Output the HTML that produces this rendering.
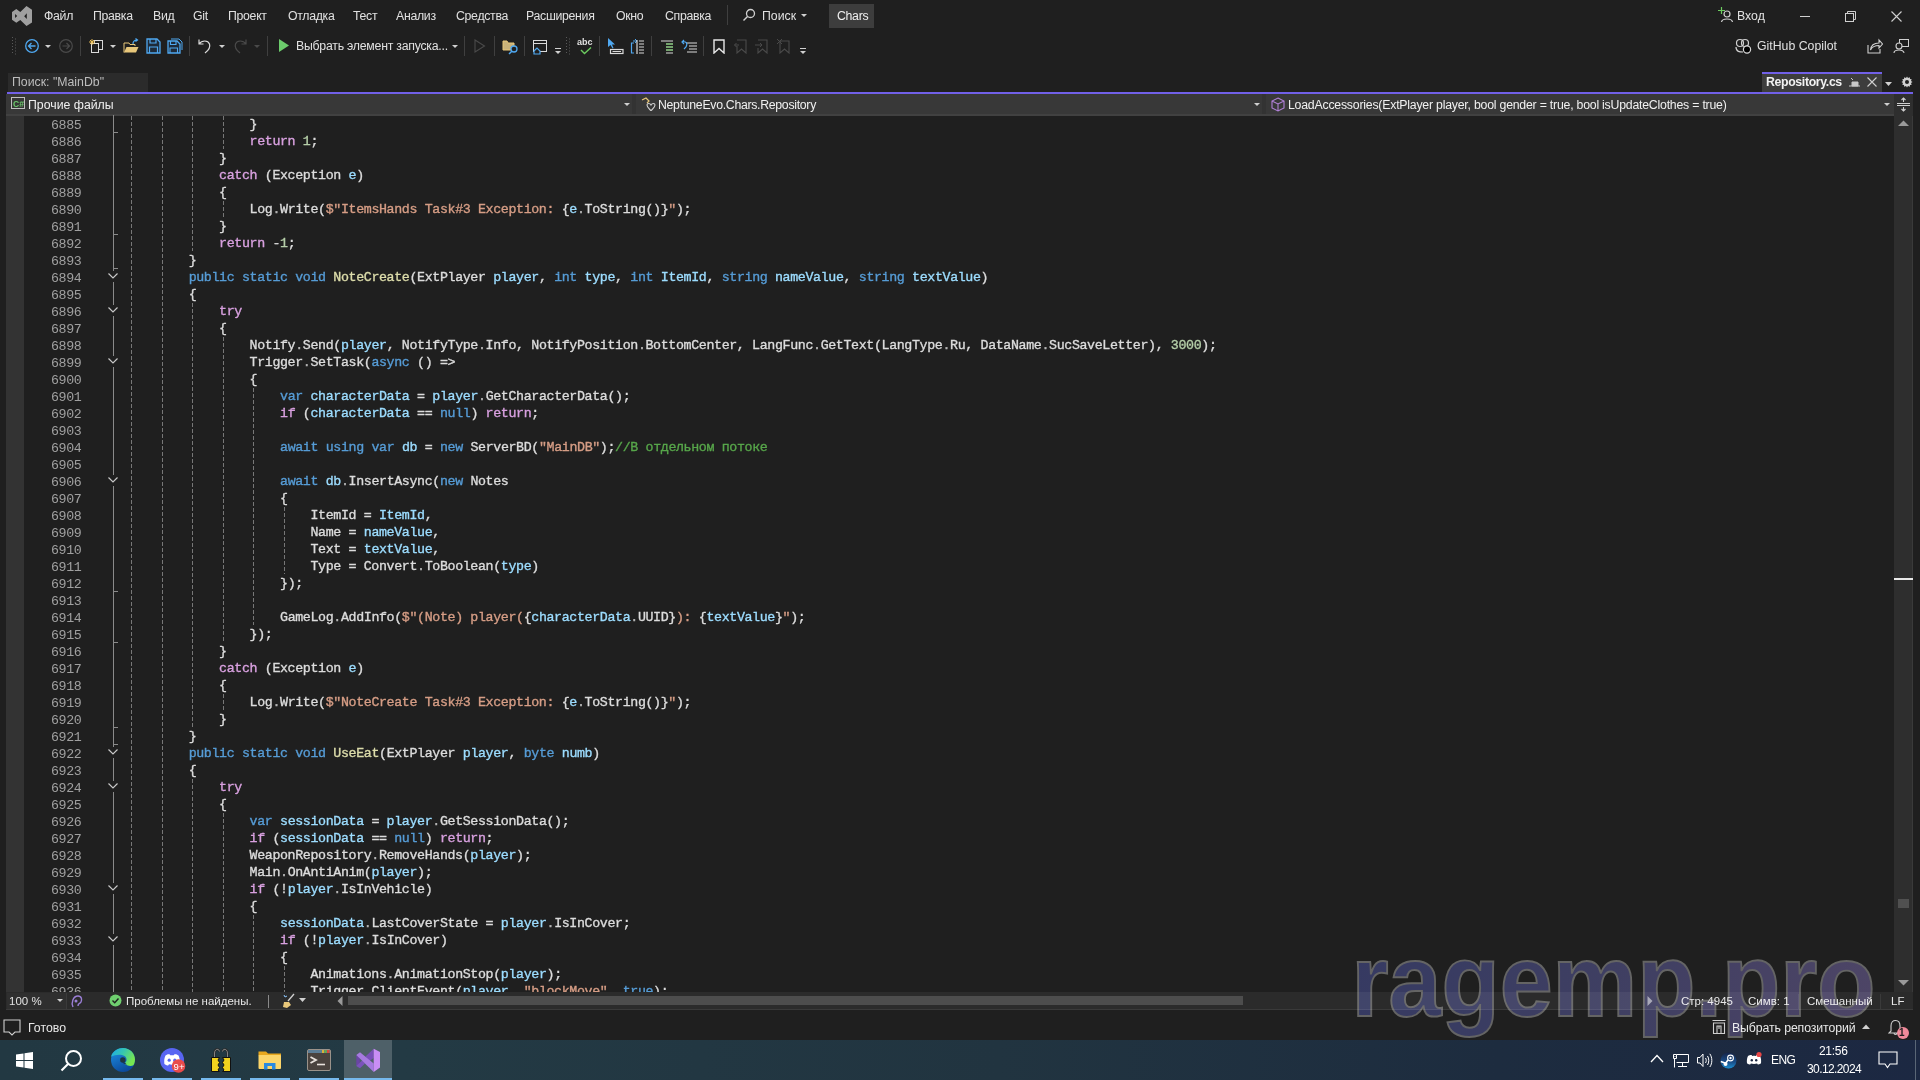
<!DOCTYPE html>
<html><head><meta charset="utf-8">
<style>
*{margin:0;padding:0;box-sizing:border-box}
html,body{width:1920px;height:1080px;overflow:hidden;background:#1F1F1F;font-family:"Liberation Sans",sans-serif;color:#DCDCDC}
.a{position:absolute}
.ui{position:absolute;font-size:12.3px;white-space:nowrap;color:#E0E0E0;line-height:16px}
.ln{position:absolute;left:24px;width:57.5px;text-align:right;font-family:"Liberation Mono",monospace;font-size:13.3px;letter-spacing:-0.35px;line-height:17px;color:#A0A0A0;padding-top:2px}
.cl{position:absolute;white-space:pre;font-family:"Liberation Mono",monospace;font-size:13.3px;letter-spacing:-0.3663px;line-height:17px;padding-top:1px;-webkit-text-stroke:0.35px currentColor}
.gd{position:absolute;width:1px;background:repeating-linear-gradient(to bottom,#777 0,#777 4px,transparent 4px,transparent 6px)}
.chev{position:absolute;left:107px}
.tick{position:absolute;left:113px;width:5px;height:1px;background:#8A8A8A}
.ol{position:absolute;left:113px;width:1px;background:#8A8A8A}
.sep{position:absolute;width:1px;background:#3F3F3F}
</style></head><body>

<!-- title / menu bar -->
<div class="a" style="left:0;top:0;width:1920px;height:31px;background:#1F1F1F"></div>
<svg class="a" style="left:0;top:0" width="40" height="30"><path d="M12 11.9 L16.3 9 L20.3 12 L26.5 5.9 L32 9.8 L32 22.5 L26.5 25.9 L20.3 19.9 L16.3 22.8 L12 19.7 Z M15.1 14 L17.2 16 L15.1 18.1 Z M26.8 13.2 L24.2 16.2 L26.8 19.1 Z" fill="#A0A0A0" fill-rule="evenodd"/></svg>
<div class="ui" style="left:44px;top:8px;letter-spacing:-0.3px">Файл</div>
<div class="ui" style="left:93px;top:8px;letter-spacing:-0.3px">Правка</div>
<div class="ui" style="left:153px;top:8px;letter-spacing:-0.3px">Вид</div>
<div class="ui" style="left:193px;top:8px;letter-spacing:-0.3px">Git</div>
<div class="ui" style="left:228px;top:8px;letter-spacing:-0.3px">Проект</div>
<div class="ui" style="left:288px;top:8px;letter-spacing:-0.3px">Отладка</div>
<div class="ui" style="left:353px;top:8px;letter-spacing:-0.3px">Тест</div>
<div class="ui" style="left:396px;top:8px;letter-spacing:-0.3px">Анализ</div>
<div class="ui" style="left:456px;top:8px;letter-spacing:-0.3px">Средства</div>
<div class="ui" style="left:526px;top:8px;letter-spacing:-0.3px">Расширения</div>
<div class="ui" style="left:616px;top:8px;letter-spacing:-0.3px">Окно</div>
<div class="ui" style="left:665px;top:8px;letter-spacing:-0.3px">Справка</div>
<div class="sep" style="left:727px;top:5px;height:20px"></div>
<svg class="a" style="left:742px;top:8px" width="14" height="14"><circle cx="8.5" cy="5.5" r="4" stroke="#D0D0D0" stroke-width="1.3" fill="none"/><path d="M5.5 8.5 L1.5 12.5" stroke="#D0D0D0" stroke-width="1.5"/></svg>
<div class="ui" style="left:762px;top:8px">Поиск</div>
<svg class="a" style="left:801px;top:14px" width="7" height="4"><path d="M0 0 L6 0 L3 3Z" fill="#D0D0D0"/></svg>
<div class="a" style="left:829px;top:4px;width:45px;height:24px;background:#3D3D3D"></div>
<div class="ui" style="left:837px;top:8px;color:#F0F0F0;letter-spacing:-0.3px">Chars</div>

<svg class="a" style="left:1718px;top:7px" width="16" height="16"><path d="M0 3.5 L7 3.5 M3.5 0 L3.5 7" stroke="#6CCB5F" stroke-width="1.2"/><circle cx="9" cy="7" r="3" stroke="#D0D0D0" stroke-width="1.2" fill="none"/><path d="M3.5 15 C4 11 14 11 14.5 15" stroke="#D0D0D0" stroke-width="1.2" fill="none"/></svg>
<div class="ui" style="left:1737px;top:8px">Вход</div>
<div class="a" style="left:1800px;top:16px;width:10px;height:1px;background:#D0D0D0"></div>
<svg class="a" style="left:1845px;top:11px" width="11" height="11"><path d="M2.5 2.5 L2.5 0.5 L10.5 0.5 L10.5 8.5 L8.5 8.5" stroke="#D0D0D0" fill="none"/><rect x="0.5" y="2.5" width="8" height="8" stroke="#D0D0D0" fill="none"/></svg>
<svg class="a" style="left:1891px;top:11px" width="11" height="11"><path d="M0.5 0.5 L10.5 10.5 M10.5 0.5 L0.5 10.5" stroke="#D0D0D0" stroke-width="1.1"/></svg>

<!-- toolbar -->
<svg class="a" style="left:12px;top:37px" width="5" height="18"><g fill="#5A5A5A"><rect x="0" y="0" width="1" height="1"/><rect x="3" y="1.5" width="1" height="1"/><rect x="0" y="3" width="1" height="1"/><rect x="3" y="4.5" width="1" height="1"/><rect x="0" y="6" width="1" height="1"/><rect x="3" y="7.5" width="1" height="1"/><rect x="0" y="9" width="1" height="1"/><rect x="3" y="10.5" width="1" height="1"/><rect x="0" y="12" width="1" height="1"/><rect x="3" y="13.5" width="1" height="1"/><rect x="0" y="15" width="1" height="1"/><rect x="3" y="16.5" width="1" height="1"/></g></svg>
<svg class="a" style="left:24px;top:38px" width="16" height="16"><circle cx="8" cy="8" r="6.3" stroke="#4FA8F0" stroke-width="1.3" fill="none"/><path d="M11.5 8 L4.5 8 M7.5 5 L4.5 8 L7.5 11" stroke="#4FA8F0" stroke-width="1.3" fill="none"/></svg>
<svg class="a" style="left:45px;top:45px" width="7" height="4"><path d="M0 0 L6 0 L3 3Z" fill="#D0D0D0"/></svg>
<svg class="a" style="left:58px;top:38px" width="16" height="16"><circle cx="8" cy="8" r="6.3" stroke="#4A4A4A" stroke-width="1.2" fill="none"/><path d="M4.5 8 L11.5 8 M8.5 5 L11.5 8 L8.5 11" stroke="#4A4A4A" stroke-width="1.2" fill="none"/></svg>
<div class="sep" style="left:80px;top:36px;height:20px"></div>
<svg class="a" style="left:88px;top:38px" width="18" height="18"><rect x="6.5" y="2.5" width="8" height="9" stroke="#DADADA" fill="none"/><rect x="3.5" y="5.5" width="7" height="9" stroke="#DADADA" fill="#1F1F1F"/><path d="M2 2 L6 6 M6 2 L2 6 M4 1 L4 7 M1 4 L7 4" stroke="#F2C45A" stroke-width="0.9"/></svg>
<svg class="a" style="left:110px;top:45px" width="7" height="4"><path d="M0 0 L6 0 L3 3Z" fill="#D0D0D0"/></svg>
<svg class="a" style="left:123px;top:38px" width="17" height="16"><path d="M1 14.5 L1 5 L6 5 L7 6.5 L12 6.5 L12 8" stroke="#E8C77A" fill="none"/><path d="M1 14.5 L3.5 9 L15.5 9 L13 14.5 Z" fill="#E8C77A"/><path d="M10 6 C10 3 12 2 14 2 M12.5 0.5 L14.5 2 L12.5 3.5" stroke="#4FA8F0" stroke-width="1.2" fill="none"/></svg>
<svg class="a" style="left:146px;top:38px" width="15" height="16"><path d="M1 1 L11 1 L14 4 L14 15 L1 15 Z" stroke="#4FA8F0" stroke-width="1.3" fill="#1E2A38"/><path d="M4 1 L4 5 L10 5 L10 1" stroke="#4FA8F0" stroke-width="1.2" fill="none"/><path d="M3.5 15 L3.5 9 L11.5 9 L11.5 15" stroke="#4FA8F0" stroke-width="1.2" fill="none"/></svg>
<svg class="a" style="left:167px;top:38px" width="16" height="16"><path d="M4 1 L12 1 L15 4 L15 12" stroke="#4FA8F0" fill="none"/><path d="M1 3 L10 3 L13 6 L13 15 L1 15 Z" stroke="#4FA8F0" stroke-width="1.3" fill="#1E2A38"/><path d="M3.5 3 L3.5 6.5 L9 6.5 L9 3" stroke="#4FA8F0" stroke-width="1.1" fill="none"/><path d="M3 15 L3 10 L10.5 10 L10.5 15" stroke="#4FA8F0" stroke-width="1.1" fill="none"/></svg>
<div class="sep" style="left:189px;top:36px;height:20px"></div>
<svg class="a" style="left:197px;top:38px" width="16" height="16"><path d="M2 1.5 L2 6 L6.5 6 M2 6 C5 2 11 2 12.5 6 C13.5 9 12 12 8 15" stroke="#DADADA" stroke-width="1.2" fill="none"/></svg>
<svg class="a" style="left:219px;top:45px" width="7" height="4"><path d="M0 0 L6 0 L3 3Z" fill="#D0D0D0"/></svg>
<svg class="a" style="left:232px;top:38px" width="16" height="16"><path d="M14 1.5 L14 6 L9.5 6 M14 6 C11 2 5 2 3.5 6 C2.5 9 4 12 8 15" stroke="#4A4A4A" stroke-width="1.2" fill="none"/></svg>
<svg class="a" style="left:254px;top:45px" width="7" height="4"><path d="M0 0 L6 0 L3 3Z" fill="#4A4A4A"/></svg>
<div class="sep" style="left:267px;top:36px;height:20px"></div>
<svg class="a" style="left:278px;top:38px" width="12" height="15"><path d="M1 1 L11 7.5 L1 14 Z" fill="#6CCB6C"/></svg>
<div class="ui" style="left:296px;top:38px;letter-spacing:-0.24px">Выбрать элемент запуска...</div>
<svg class="a" style="left:452px;top:45px" width="7" height="4"><path d="M0 0 L6 0 L3 3Z" fill="#D0D0D0"/></svg>
<div class="sep" style="left:464px;top:36px;height:20px"></div>
<svg class="a" style="left:474px;top:39px" width="12" height="15"><path d="M1 1 L10.5 7 L1 13 Z" stroke="#4A4A4A" stroke-width="1.1" fill="none"/></svg>
<div class="sep" style="left:494px;top:36px;height:20px"></div>
<svg class="a" style="left:502px;top:39px" width="17" height="16"><path d="M1 3 L1 11 L12 11 L12 4 L6 4 L5 2 L1 2Z" fill="#C9B27A" stroke="#E8C77A"/><circle cx="12" cy="10" r="3" stroke="#4FA8F0" stroke-width="1.3" fill="#1F1F1F"/><path d="M9.8 12.2 L7 15" stroke="#4FA8F0" stroke-width="1.5"/></svg>
<div class="sep" style="left:524px;top:36px;height:20px"></div>
<svg class="a" style="left:532px;top:39px" width="16" height="16"><rect x="1.5" y="1.5" width="13" height="11" stroke="#DADADA" fill="none"/><path d="M1.5 4.5 L14.5 4.5" stroke="#DADADA"/><path d="M2 12 L5 9 L8 12 L8 15 L2 15 Z" stroke="#4FA8F0" stroke-width="1.2" fill="#1F1F1F"/></svg>
<svg class="a" style="left:555px;top:48px" width="7" height="7"><path d="M0 0.5 L6 0.5" stroke="#D0D0D0"/><path d="M0 3 L6 3 L3 6Z" fill="#D0D0D0"/></svg>
<svg class="a" style="left:566px;top:37px" width="5" height="18"><g fill="#5A5A5A"><rect x="0" y="0" width="1" height="1"/><rect x="3" y="1.5" width="1" height="1"/><rect x="0" y="3" width="1" height="1"/><rect x="3" y="4.5" width="1" height="1"/><rect x="0" y="6" width="1" height="1"/><rect x="3" y="7.5" width="1" height="1"/><rect x="0" y="9" width="1" height="1"/><rect x="3" y="10.5" width="1" height="1"/><rect x="0" y="12" width="1" height="1"/><rect x="3" y="13.5" width="1" height="1"/><rect x="0" y="15" width="1" height="1"/><rect x="3" y="16.5" width="1" height="1"/></g></svg>
<div class="a" style="left:577px;top:37px;font-size:9px;color:#E0E0E0;font-weight:bold">abc</div>
<svg class="a" style="left:580px;top:47px" width="12" height="8"><path d="M1 3 L4.5 6.5 L11 0.5" stroke="#6CCB5F" stroke-width="1.4" fill="none"/></svg>
<div class="sep" style="left:599px;top:36px;height:20px"></div>
<svg class="a" style="left:607px;top:38px" width="17" height="17"><path d="M1 0 L1 9 L3.5 7 L5.5 10.5 L6.5 10 L5 6.5 L8 6.5 Z" fill="#4FA8F0"/><rect x="3.5" y="11.5" width="12.5" height="4" stroke="#DADADA" stroke-width="1.2" fill="none"/><path d="M5.5 13.5 L14 13.5" stroke="#DADADA"/></svg>
<svg class="a" style="left:630px;top:38px" width="15" height="17"><path d="M4 5 L1.5 5 L1.5 15 L4 15" stroke="#4FA8F0" stroke-width="1.2" fill="none"/><path d="M3 3 L6 3 M5 1 L7 3 L5 5" stroke="#4FA8F0" fill="none"/><path d="M7 2 L7 16" stroke="#DADADA" stroke-width="1.2"/><path d="M9 3 L14 3 M9 6 L14 6 M9 9 L14 9 M9 12 L14 12 M9 15 L14 15" stroke="#DADADA" stroke-width="1.1"/></svg>
<div class="sep" style="left:651px;top:36px;height:20px"></div>
<svg class="a" style="left:661px;top:40px" width="13" height="14"><path d="M0 1 L12 1 M5 4 L12 4 M5 7 L12 7 M5 10 L12 10 M5 13 L12 13" stroke="#DADADA" stroke-width="1.1"/><path d="M5 4 L12 4 M5 7 L12 7 M5 10 L12 10" stroke="#6CCB5F" stroke-width="1.1"/></svg>
<svg class="a" style="left:681px;top:39px" width="17" height="15"><path d="M5 4 L16 4 M8 7 L16 7 M8 10 L16 10 M6 13 L16 13" stroke="#DADADA" stroke-width="1.1"/><path d="M3 1 L1 3 L3 5 M1 3 C5 2 7 4 5 8 L3 10" stroke="#4FA8F0" stroke-width="1.2" fill="none"/></svg>
<div class="sep" style="left:703px;top:36px;height:20px"></div>
<svg class="a" style="left:713px;top:39px" width="12" height="15"><path d="M1 1 L11 1 L11 14 L6 9.5 L1 14 Z" stroke="#E8E8E8" stroke-width="1.4" fill="none"/></svg>
<svg class="a" style="left:734px;top:39px" width="13" height="15"><path d="M3 1 L12 1 L12 14 L7.5 10 L3 14 L3 7" stroke="#4A4A4A" stroke-width="1.1" fill="none"/><path d="M0.5 6 L5 6 M2.5 4 L0.5 6 L2.5 8" stroke="#4A4A4A" fill="none"/></svg>
<svg class="a" style="left:755px;top:39px" width="14" height="15"><path d="M3 1 L12 1 L12 14 L7.5 10 L3 14 L3 9" stroke="#4A4A4A" stroke-width="1.1" fill="none"/><path d="M0 6 L7 6 M5 4 L7 6 L5 8" stroke="#4A4A4A" fill="none"/></svg>
<svg class="a" style="left:777px;top:39px" width="14" height="15"><path d="M3 2 L12 2 L12 14 L7.5 10 L3 14 Z" stroke="#4A4A4A" stroke-width="1.1" fill="none"/><path d="M0 0 L5 5 M5 0 L0 5" stroke="#4A4A4A"/></svg>
<svg class="a" style="left:800px;top:48px" width="7" height="7"><path d="M0 0.5 L6 0.5" stroke="#D0D0D0"/><path d="M0 3 L6 3 L3 6Z" fill="#D0D0D0"/></svg>

<svg class="a" style="left:1735px;top:38px" width="17" height="16"><circle cx="5" cy="5" r="3.5" stroke="#D0D0D0" stroke-width="1.2" fill="none"/><circle cx="10" cy="5" r="3.5" stroke="#D0D0D0" stroke-width="1.2" fill="none"/><path d="M1 9 C1 14 5 14 8 14" stroke="#D0D0D0" stroke-width="1.2" fill="none"/><circle cx="12" cy="11.5" r="3.6" fill="#000" stroke="#D8D8D8" stroke-width="1.2"/></svg>
<div class="ui" style="left:1757px;top:38px">GitHub Copilot</div>
<svg class="a" style="left:1867px;top:38px" width="16" height="16"><path d="M1 7 L1 15 L13 15 L13 11" stroke="#D0D0D0" stroke-width="1.1" fill="none"/><path d="M3.5 12 C4 7 8 5 12 5 L12 2 L15.5 6 L12 10 L12 7.5 C8 7.5 5 9 3.5 12Z" stroke="#D0D0D0" stroke-width="1.1" fill="none"/></svg>
<svg class="a" style="left:1893px;top:38px" width="17" height="16"><rect x="6.5" y="1.5" width="9" height="7" stroke="#D0D0D0" fill="none"/><circle cx="6" cy="8" r="3" stroke="#D0D0D0" stroke-width="1.1" fill="#1F1F1F"/><path d="M1 15 C1 11 11 11 11 15" stroke="#D0D0D0" stroke-width="1.1" fill="none"/></svg>

<!-- tab row -->
<div class="a" style="left:8px;top:73px;width:140px;height:19px;background:#2B2B2B"></div>
<div class="ui" style="left:12px;top:74px;color:#BDBDBD">Поиск: "MainDb"</div>
<div class="a" style="left:1762px;top:72px;width:120px;height:20px;background:#3D3D3D;border-top:2px solid #7160E8"></div>
<div class="ui" style="left:1766px;top:74px;font-weight:bold;color:#F2F2F2;font-size:12.3px;letter-spacing:-0.35px">Repository.cs</div>
<svg class="a" style="left:1849px;top:77px" width="11" height="10"><path d="M2 1 L4 3" stroke="#C8C8C8"/><path d="M3 9 L3 5 L9 5 L9 9 Z M0 9 L11 9" stroke="#C8C8C8" fill="#C8C8C8"/></svg>
<svg class="a" style="left:1867px;top:77px" width="10" height="10"><path d="M0.5 0.5 L9.5 9.5 M9.5 0.5 L0.5 9.5" stroke="#D0D0D0" stroke-width="1.1"/></svg>
<svg class="a" style="left:1885px;top:82px" width="8" height="5"><path d="M0 0 L7 0 L3.5 4Z" fill="#D0D0D0"/></svg>
<svg class="a" style="left:1901px;top:76px" width="12" height="12" viewBox="0 0 12 12"><path d="M6 0.5 L7 2 L8.8 1.3 L9 3 L10.7 3.2 L10 5 L11.5 6 L10 7 L10.7 8.8 L9 9 L8.8 10.7 L7 10 L6 11.5 L5 10 L3.2 10.7 L3 9 L1.3 8.8 L2 7 L0.5 6 L2 5 L1.3 3.2 L3 3 L3.2 1.3 L5 2 Z" fill="#D0D0D0"/><circle cx="6" cy="6" r="2" fill="#1F1F1F"/></svg>

<!-- purple doc line -->
<div class="a" style="left:7px;top:92px;width:1906px;height:2px;background:#7160E8"></div>

<!-- nav bar -->
<div class="a" style="left:6px;top:94px;width:1907px;height:22px;background:#383838"></div>
<div class="a" style="left:6px;top:114px;width:1888px;height:2px;background:#414141"></div>
<div class="a" style="left:632px;top:94px;width:4px;height:20px;background:#333"></div>
<div class="a" style="left:1262px;top:94px;width:4px;height:20px;background:#333"></div>
<div class="a" style="left:1894px;top:94px;width:19px;height:22px;background:#2E2E2E"></div>
<svg class="a" style="left:11px;top:97px" width="15" height="13"><rect x="0.5" y="0.5" width="13" height="11" stroke="#C0C0C0" fill="none"/><text x="2" y="9.5" font-size="8.5" font-family="Liberation Sans" fill="#6CCB6C" font-weight="bold">C#</text></svg>
<div class="ui" style="left:28px;top:97px;color:#F0F0F0">Прочие файлы</div>
<svg class="a" style="left:624px;top:103px" width="7" height="4"><path d="M0 0 L6 0 L3 3Z" fill="#D0D0D0"/></svg>
<svg class="a" style="left:641px;top:97px" width="16" height="15"><path d="M1 3 L5 1 L8 4 L6 6" stroke="#E8C77A" stroke-width="1.2" fill="none"/><path d="M6 8 C6 6 9 6 10 8 C11 6 14 6 14 8 C14 11 10 13 10 14 C10 13 6 11 6 8Z" stroke="#D0D0D0" stroke-width="1.1" fill="none"/></svg>
<div class="ui" style="left:658px;top:97px;color:#F0F0F0;letter-spacing:-0.3px">NeptuneEvo.Chars.Repository</div>
<svg class="a" style="left:1254px;top:103px" width="7" height="4"><path d="M0 0 L6 0 L3 3Z" fill="#D0D0D0"/></svg>
<svg class="a" style="left:1271px;top:97px" width="14" height="15"><path d="M7 1 L13 4 L13 11 L7 14 L1 11 L1 4 Z M1 4 L7 7 L13 4 M7 7 L7 14" stroke="#B180D7" stroke-width="1.1" fill="none"/></svg>
<div class="ui" style="left:1288px;top:97px;color:#F0F0F0;letter-spacing:-0.22px">LoadAccessories(ExtPlayer player, bool gender = true, bool isUpdateClothes = true)</div>
<svg class="a" style="left:1884px;top:103px" width="7" height="4"><path d="M0 0 L6 0 L3 3Z" fill="#D0D0D0"/></svg>
<svg class="a" style="left:1897px;top:97px" width="13" height="15"><path d="M0 6.5 L13 6.5 M0 8.5 L13 8.5 M6.5 1 L6.5 5 M6.5 10 L6.5 14 M4.5 3 L6.5 1 L8.5 3 M4.5 12 L6.5 14 L8.5 12" stroke="#D0D0D0" stroke-width="1.1" fill="none"/></svg>

<!-- editor -->
<div class="a" style="left:6px;top:116px;width:18px;height:876px;background:#333333"></div>
<div class="a" style="left:24px;top:116px;width:1870px;height:877px;background:#1F1F1F"></div>
<div class="ln" style="top:115px">6885</div>
<div class="cl" style="top:115px;left:249.56px"><span style="color:#DCDCDC">}</span></div>
<div class="tick" style="top:132px"></div>
<div class="ln" style="top:132px">6886</div>
<div class="cl" style="top:132px;left:249.56px"><span style="color:#D8A0DF">return</span><span style="color:#DCDCDC"> </span><span style="color:#B5CEA8">1</span><span style="color:#DCDCDC">;</span></div>
<div class="ln" style="top:149px">6887</div>
<div class="cl" style="top:149px;left:219.10px"><span style="color:#DCDCDC">}</span></div>
<div class="ln" style="top:166px">6888</div>
<div class="cl" style="top:166px;left:219.10px"><span style="color:#D8A0DF">catch</span><span style="color:#DCDCDC"> (Exception </span><span style="color:#9CDCFE">e</span><span style="color:#DCDCDC">)</span></div>
<div class="ln" style="top:183px">6889</div>
<div class="cl" style="top:183px;left:219.10px"><span style="color:#DCDCDC">{</span></div>
<div class="ln" style="top:200px">6890</div>
<div class="cl" style="top:200px;left:249.56px"><span style="color:#DCDCDC">Log</span><span style="color:#B4B4B4">.</span><span style="color:#DCDCDC">Write(</span><span style="color:#D69D85">$&quot;ItemsHands Task#3 Exception: </span><span style="color:#DCDCDC">{</span><span style="color:#9CDCFE">e</span><span style="color:#B4B4B4">.</span><span style="color:#DCDCDC">ToString()</span><span style="color:#DCDCDC">}</span><span style="color:#D69D85">&quot;</span><span style="color:#DCDCDC">);</span></div>
<div class="ln" style="top:217px">6891</div>
<div class="cl" style="top:217px;left:219.10px"><span style="color:#DCDCDC">}</span></div>
<div class="tick" style="top:234px"></div>
<div class="ln" style="top:234px">6892</div>
<div class="cl" style="top:234px;left:219.10px"><span style="color:#D8A0DF">return</span><span style="color:#DCDCDC"> -</span><span style="color:#B5CEA8">1</span><span style="color:#DCDCDC">;</span></div>
<div class="ln" style="top:251px">6893</div>
<div class="cl" style="top:251px;left:188.64px"><span style="color:#DCDCDC">}</span></div>
<div class="tick" style="top:268px"></div>
<div class="ln" style="top:268px">6894</div>
<div class="cl" style="top:268px;left:188.64px"><span style="color:#569CD6">public</span><span style="color:#DCDCDC"> </span><span style="color:#569CD6">static</span><span style="color:#DCDCDC"> </span><span style="color:#569CD6">void</span><span style="color:#DCDCDC"> </span><span style="color:#DCDCAA">NoteCreate</span><span style="color:#DCDCDC">(ExtPlayer </span><span style="color:#9CDCFE">player</span><span style="color:#DCDCDC">, </span><span style="color:#569CD6">int</span><span style="color:#DCDCDC"> </span><span style="color:#9CDCFE">type</span><span style="color:#DCDCDC">, </span><span style="color:#569CD6">int</span><span style="color:#DCDCDC"> </span><span style="color:#9CDCFE">ItemId</span><span style="color:#DCDCDC">, </span><span style="color:#569CD6">string</span><span style="color:#DCDCDC"> </span><span style="color:#9CDCFE">nameValue</span><span style="color:#DCDCDC">, </span><span style="color:#569CD6">string</span><span style="color:#DCDCDC"> </span><span style="color:#9CDCFE">textValue</span><span style="color:#DCDCDC">)</span></div>
<svg class="chev" style="top:268px" width="12" height="17"><path d="M1.5 5.5 L6 10 L10.5 5.5" stroke="#C8C8C8" stroke-width="1.2" fill="none"/></svg>
<div class="ln" style="top:285px">6895</div>
<div class="cl" style="top:285px;left:188.64px"><span style="color:#DCDCDC">{</span></div>
<div class="ln" style="top:302px">6896</div>
<div class="cl" style="top:302px;left:219.10px"><span style="color:#D8A0DF">try</span></div>
<svg class="chev" style="top:302px" width="12" height="17"><path d="M1.5 5.5 L6 10 L10.5 5.5" stroke="#C8C8C8" stroke-width="1.2" fill="none"/></svg>
<div class="ln" style="top:319px">6897</div>
<div class="cl" style="top:319px;left:219.10px"><span style="color:#DCDCDC">{</span></div>
<div class="ln" style="top:336px">6898</div>
<div class="cl" style="top:336px;left:249.56px"><span style="color:#DCDCDC">Notify</span><span style="color:#B4B4B4">.</span><span style="color:#DCDCDC">Send(</span><span style="color:#9CDCFE">player</span><span style="color:#DCDCDC">, NotifyType</span><span style="color:#B4B4B4">.</span><span style="color:#DCDCDC">Info, NotifyPosition</span><span style="color:#B4B4B4">.</span><span style="color:#DCDCDC">BottomCenter, LangFunc</span><span style="color:#B4B4B4">.</span><span style="color:#DCDCDC">GetText(LangType</span><span style="color:#B4B4B4">.</span><span style="color:#DCDCDC">Ru, DataName</span><span style="color:#B4B4B4">.</span><span style="color:#DCDCDC">SucSaveLetter), </span><span style="color:#B5CEA8">3000</span><span style="color:#DCDCDC">);</span></div>
<div class="ln" style="top:353px">6899</div>
<div class="cl" style="top:353px;left:249.56px"><span style="color:#DCDCDC">Trigger</span><span style="color:#B4B4B4">.</span><span style="color:#DCDCDC">SetTask(</span><span style="color:#569CD6">async</span><span style="color:#DCDCDC"> () =&gt;</span></div>
<svg class="chev" style="top:353px" width="12" height="17"><path d="M1.5 5.5 L6 10 L10.5 5.5" stroke="#C8C8C8" stroke-width="1.2" fill="none"/></svg>
<div class="ln" style="top:370px">6900</div>
<div class="cl" style="top:370px;left:249.56px"><span style="color:#DCDCDC">{</span></div>
<div class="ln" style="top:387px">6901</div>
<div class="cl" style="top:387px;left:280.02px"><span style="color:#569CD6">var</span><span style="color:#DCDCDC"> </span><span style="color:#9CDCFE">characterData</span><span style="color:#DCDCDC"> = </span><span style="color:#9CDCFE">player</span><span style="color:#B4B4B4">.</span><span style="color:#DCDCDC">GetCharacterData();</span></div>
<div class="ln" style="top:404px">6902</div>
<div class="cl" style="top:404px;left:280.02px"><span style="color:#D8A0DF">if</span><span style="color:#DCDCDC"> (</span><span style="color:#9CDCFE">characterData</span><span style="color:#DCDCDC"> == </span><span style="color:#569CD6">null</span><span style="color:#DCDCDC">) </span><span style="color:#D8A0DF">return</span><span style="color:#DCDCDC">;</span></div>
<div class="ln" style="top:421px">6903</div>
<div class="ln" style="top:438px">6904</div>
<div class="cl" style="top:438px;left:280.02px"><span style="color:#569CD6">await</span><span style="color:#DCDCDC"> </span><span style="color:#569CD6">using</span><span style="color:#DCDCDC"> </span><span style="color:#569CD6">var</span><span style="color:#DCDCDC"> </span><span style="color:#9CDCFE">db</span><span style="color:#DCDCDC"> = </span><span style="color:#569CD6">new</span><span style="color:#DCDCDC"> ServerBD(</span><span style="color:#D69D85">&quot;MainDB&quot;</span><span style="color:#DCDCDC">);</span><span style="color:#57A64A">//В отдельном потоке</span></div>
<div class="ln" style="top:455px">6905</div>
<div class="ln" style="top:472px">6906</div>
<div class="cl" style="top:472px;left:280.02px"><span style="color:#569CD6">await</span><span style="color:#DCDCDC"> </span><span style="color:#9CDCFE">db</span><span style="color:#B4B4B4">.</span><span style="color:#DCDCDC">InsertAsync(</span><span style="color:#569CD6">new</span><span style="color:#DCDCDC"> Notes</span></div>
<svg class="chev" style="top:472px" width="12" height="17"><path d="M1.5 5.5 L6 10 L10.5 5.5" stroke="#C8C8C8" stroke-width="1.2" fill="none"/></svg>
<div class="ln" style="top:489px">6907</div>
<div class="cl" style="top:489px;left:280.02px"><span style="color:#DCDCDC">{</span></div>
<div class="ln" style="top:506px">6908</div>
<div class="cl" style="top:506px;left:310.48px"><span style="color:#DCDCDC">ItemId = </span><span style="color:#9CDCFE">ItemId</span><span style="color:#DCDCDC">,</span></div>
<div class="ln" style="top:523px">6909</div>
<div class="cl" style="top:523px;left:310.48px"><span style="color:#DCDCDC">Name = </span><span style="color:#9CDCFE">nameValue</span><span style="color:#DCDCDC">,</span></div>
<div class="ln" style="top:540px">6910</div>
<div class="cl" style="top:540px;left:310.48px"><span style="color:#DCDCDC">Text = </span><span style="color:#9CDCFE">textValue</span><span style="color:#DCDCDC">,</span></div>
<div class="ln" style="top:557px">6911</div>
<div class="cl" style="top:557px;left:310.48px"><span style="color:#DCDCDC">Type = Convert</span><span style="color:#B4B4B4">.</span><span style="color:#DCDCDC">ToBoolean(</span><span style="color:#9CDCFE">type</span><span style="color:#DCDCDC">)</span></div>
<div class="ln" style="top:574px">6912</div>
<div class="cl" style="top:574px;left:280.02px"><span style="color:#DCDCDC">});</span></div>
<div class="tick" style="top:591px"></div>
<div class="ln" style="top:591px">6913</div>
<div class="ln" style="top:608px">6914</div>
<div class="cl" style="top:608px;left:280.02px"><span style="color:#DCDCDC">GameLog</span><span style="color:#B4B4B4">.</span><span style="color:#DCDCDC">AddInfo(</span><span style="color:#D69D85">$&quot;(Note) player(</span><span style="color:#DCDCDC">{</span><span style="color:#9CDCFE">characterData</span><span style="color:#B4B4B4">.</span><span style="color:#DCDCDC">UUID</span><span style="color:#DCDCDC">}</span><span style="color:#D69D85">): </span><span style="color:#DCDCDC">{</span><span style="color:#9CDCFE">textValue</span><span style="color:#DCDCDC">}</span><span style="color:#D69D85">&quot;</span><span style="color:#DCDCDC">);</span></div>
<div class="ln" style="top:625px">6915</div>
<div class="cl" style="top:625px;left:249.56px"><span style="color:#DCDCDC">});</span></div>
<div class="tick" style="top:642px"></div>
<div class="ln" style="top:642px">6916</div>
<div class="cl" style="top:642px;left:219.10px"><span style="color:#DCDCDC">}</span></div>
<div class="ln" style="top:659px">6917</div>
<div class="cl" style="top:659px;left:219.10px"><span style="color:#D8A0DF">catch</span><span style="color:#DCDCDC"> (Exception </span><span style="color:#9CDCFE">e</span><span style="color:#DCDCDC">)</span></div>
<div class="ln" style="top:676px">6918</div>
<div class="cl" style="top:676px;left:219.10px"><span style="color:#DCDCDC">{</span></div>
<div class="ln" style="top:693px">6919</div>
<div class="cl" style="top:693px;left:249.56px"><span style="color:#DCDCDC">Log</span><span style="color:#B4B4B4">.</span><span style="color:#DCDCDC">Write(</span><span style="color:#D69D85">$&quot;NoteCreate Task#3 Exception: </span><span style="color:#DCDCDC">{</span><span style="color:#9CDCFE">e</span><span style="color:#B4B4B4">.</span><span style="color:#DCDCDC">ToString()</span><span style="color:#DCDCDC">}</span><span style="color:#D69D85">&quot;</span><span style="color:#DCDCDC">);</span></div>
<div class="ln" style="top:710px">6920</div>
<div class="cl" style="top:710px;left:219.10px"><span style="color:#DCDCDC">}</span></div>
<div class="tick" style="top:727px"></div>
<div class="ln" style="top:727px">6921</div>
<div class="cl" style="top:727px;left:188.64px"><span style="color:#DCDCDC">}</span></div>
<div class="tick" style="top:744px"></div>
<div class="ln" style="top:744px">6922</div>
<div class="cl" style="top:744px;left:188.64px"><span style="color:#569CD6">public</span><span style="color:#DCDCDC"> </span><span style="color:#569CD6">static</span><span style="color:#DCDCDC"> </span><span style="color:#569CD6">void</span><span style="color:#DCDCDC"> </span><span style="color:#DCDCAA">UseEat</span><span style="color:#DCDCDC">(ExtPlayer </span><span style="color:#9CDCFE">player</span><span style="color:#DCDCDC">, </span><span style="color:#569CD6">byte</span><span style="color:#DCDCDC"> </span><span style="color:#9CDCFE">numb</span><span style="color:#DCDCDC">)</span></div>
<svg class="chev" style="top:744px" width="12" height="17"><path d="M1.5 5.5 L6 10 L10.5 5.5" stroke="#C8C8C8" stroke-width="1.2" fill="none"/></svg>
<div class="ln" style="top:761px">6923</div>
<div class="cl" style="top:761px;left:188.64px"><span style="color:#DCDCDC">{</span></div>
<div class="ln" style="top:778px">6924</div>
<div class="cl" style="top:778px;left:219.10px"><span style="color:#D8A0DF">try</span></div>
<svg class="chev" style="top:778px" width="12" height="17"><path d="M1.5 5.5 L6 10 L10.5 5.5" stroke="#C8C8C8" stroke-width="1.2" fill="none"/></svg>
<div class="ln" style="top:795px">6925</div>
<div class="cl" style="top:795px;left:219.10px"><span style="color:#DCDCDC">{</span></div>
<div class="ln" style="top:812px">6926</div>
<div class="cl" style="top:812px;left:249.56px"><span style="color:#569CD6">var</span><span style="color:#DCDCDC"> </span><span style="color:#9CDCFE">sessionData</span><span style="color:#DCDCDC"> = </span><span style="color:#9CDCFE">player</span><span style="color:#B4B4B4">.</span><span style="color:#DCDCDC">GetSessionData();</span></div>
<div class="ln" style="top:829px">6927</div>
<div class="cl" style="top:829px;left:249.56px"><span style="color:#D8A0DF">if</span><span style="color:#DCDCDC"> (</span><span style="color:#9CDCFE">sessionData</span><span style="color:#DCDCDC"> == </span><span style="color:#569CD6">null</span><span style="color:#DCDCDC">) </span><span style="color:#D8A0DF">return</span><span style="color:#DCDCDC">;</span></div>
<div class="ln" style="top:846px">6928</div>
<div class="cl" style="top:846px;left:249.56px"><span style="color:#DCDCDC">WeaponRepository</span><span style="color:#B4B4B4">.</span><span style="color:#DCDCDC">RemoveHands(</span><span style="color:#9CDCFE">player</span><span style="color:#DCDCDC">);</span></div>
<div class="ln" style="top:863px">6929</div>
<div class="cl" style="top:863px;left:249.56px"><span style="color:#DCDCDC">Main</span><span style="color:#B4B4B4">.</span><span style="color:#DCDCDC">OnAntiAnim(</span><span style="color:#9CDCFE">player</span><span style="color:#DCDCDC">);</span></div>
<div class="ln" style="top:880px">6930</div>
<div class="cl" style="top:880px;left:249.56px"><span style="color:#D8A0DF">if</span><span style="color:#DCDCDC"> (!</span><span style="color:#9CDCFE">player</span><span style="color:#B4B4B4">.</span><span style="color:#DCDCDC">IsInVehicle)</span></div>
<svg class="chev" style="top:880px" width="12" height="17"><path d="M1.5 5.5 L6 10 L10.5 5.5" stroke="#C8C8C8" stroke-width="1.2" fill="none"/></svg>
<div class="ln" style="top:897px">6931</div>
<div class="cl" style="top:897px;left:249.56px"><span style="color:#DCDCDC">{</span></div>
<div class="ln" style="top:914px">6932</div>
<div class="cl" style="top:914px;left:280.02px"><span style="color:#9CDCFE">sessionData</span><span style="color:#B4B4B4">.</span><span style="color:#DCDCDC">LastCoverState = </span><span style="color:#9CDCFE">player</span><span style="color:#B4B4B4">.</span><span style="color:#DCDCDC">IsInCover;</span></div>
<div class="ln" style="top:931px">6933</div>
<div class="cl" style="top:931px;left:280.02px"><span style="color:#D8A0DF">if</span><span style="color:#DCDCDC"> (!</span><span style="color:#9CDCFE">player</span><span style="color:#B4B4B4">.</span><span style="color:#DCDCDC">IsInCover)</span></div>
<svg class="chev" style="top:931px" width="12" height="17"><path d="M1.5 5.5 L6 10 L10.5 5.5" stroke="#C8C8C8" stroke-width="1.2" fill="none"/></svg>
<div class="ln" style="top:948px">6934</div>
<div class="cl" style="top:948px;left:280.02px"><span style="color:#DCDCDC">{</span></div>
<div class="ln" style="top:965px">6935</div>
<div class="cl" style="top:965px;left:310.48px"><span style="color:#DCDCDC">Animations</span><span style="color:#B4B4B4">.</span><span style="color:#DCDCDC">AnimationStop(</span><span style="color:#9CDCFE">player</span><span style="color:#DCDCDC">);</span></div>
<div class="ln" style="top:982px">6936</div>
<div class="cl" style="top:982px;left:310.48px"><span style="color:#DCDCDC">Trigger</span><span style="color:#B4B4B4">.</span><span style="color:#DCDCDC">ClientEvent(</span><span style="color:#9CDCFE">player</span><span style="color:#DCDCDC">, </span><span style="color:#D69D85">&quot;blockMove&quot;</span><span style="color:#DCDCDC">, </span><span style="color:#569CD6">true</span><span style="color:#DCDCDC">);</span></div>
<div class="gd" style="left:131px;top:116px;height:876px"></div>
<div class="gd" style="left:162px;top:116px;height:876px"></div>
<div class="gd" style="left:192px;top:116px;height:135px"></div>
<div class="gd" style="left:192px;top:303px;height:424px"></div>
<div class="gd" style="left:192px;top:779px;height:213px"></div>
<div class="gd" style="left:223px;top:116px;height:33px"></div>
<div class="gd" style="left:223px;top:201px;height:16px"></div>
<div class="gd" style="left:223px;top:337px;height:305px"></div>
<div class="gd" style="left:223px;top:694px;height:16px"></div>
<div class="gd" style="left:223px;top:813px;height:179px"></div>
<div class="gd" style="left:253px;top:388px;height:237px"></div>
<div class="gd" style="left:253px;top:915px;height:77px"></div>
<div class="gd" style="left:284px;top:507px;height:67px"></div>
<div class="gd" style="left:284px;top:966px;height:26px"></div>
<div class="ol" style="top:115px;height:156px"></div>
<div class="ol" style="top:282px;height:23px"></div>
<div class="ol" style="top:316px;height:40px"></div>
<div class="ol" style="top:367px;height:108px"></div>
<div class="ol" style="top:486px;height:261px"></div>
<div class="ol" style="top:758px;height:23px"></div>
<div class="ol" style="top:792px;height:91px"></div>
<div class="ol" style="top:894px;height:40px"></div>
<div class="ol" style="top:945px;height:48px"></div>

<!-- vertical scrollbar -->
<div class="a" style="left:1894px;top:116px;width:19px;height:877px;background:#2E2E2E;border-right:1px solid #3A3A3A"></div>
<svg class="a" style="left:1898px;top:120px" width="11" height="6"><path d="M0 6 L5.5 0.5 L11 6Z" fill="#9A9A9A"/></svg>
<div class="a" style="left:1894px;top:578px;width:19px;height:2px;background:#E8E8E8"></div>
<div class="a" style="left:1898px;top:899px;width:11px;height:9px;background:#505050"></div>
<svg class="a" style="left:1898px;top:980px" width="11" height="6"><path d="M0 0 L11 0 L5.5 5.5Z" fill="#9A9A9A"/></svg>

<!-- editor bottom bar -->
<div class="a" style="left:6px;top:992px;width:1907px;height:18px;background:#2B2B2B;border-bottom:1px solid #3A3A3A"></div>
<div class="a" style="left:7px;top:993px;width:59px;height:16px;background:#2F2F2F"></div>
<div class="ui" style="left:9px;top:993px;font-size:11.5px;color:#E0E0E0">100 %</div>
<svg class="a" style="left:57px;top:999px" width="7" height="4"><path d="M0 0 L6 0 L3 3Z" fill="#D0D0D0"/></svg>
<div class="a" style="left:66px;top:993px;width:1px;height:16px;background:#3A3A3A"></div>
<svg class="a" style="left:70px;top:994px" width="13" height="14"><path d="M3 13 C1 9 3 2 8 2 C12 2 12 6 11 8 C10 10 8 9 8 12" stroke="#9B7FD6" stroke-width="1.4" fill="none"/><circle cx="6" cy="7" r="1.5" fill="#9B7FD6"/></svg>
<svg class="a" style="left:109px;top:994px" width="13" height="13"><circle cx="6.5" cy="6.5" r="6" fill="#6FCF6F"/><path d="M3.5 6.5 L5.7 8.7 L9.5 4.5" stroke="#1F1F1F" stroke-width="1.4" fill="none"/></svg>
<div class="ui" style="left:126px;top:993px;font-size:11.5px;color:#E8E8E8">Проблемы не найдены.</div>
<div class="a" style="left:268px;top:995px;width:1px;height:13px;background:#8A8A8A"></div>
<svg class="a" style="left:282px;top:993px" width="14" height="15"><path d="M12 1 L6 8" stroke="#D0D0D0" stroke-width="1.3"/><path d="M2 9 L7 9 L9 12 L5 15 L1 14 Z" fill="#E8C77A"/><path d="M2 2 L3 4 L5 3" stroke="#8EC9FF" fill="none"/></svg>
<svg class="a" style="left:299px;top:998px" width="8" height="5"><path d="M0 0 L7 0 L3.5 4Z" fill="#D0D0D0"/></svg>
<svg class="a" style="left:337px;top:996px" width="6" height="10"><path d="M5.5 0 L0.5 5 L5.5 10Z" fill="#9A9A9A"/></svg>
<div class="a" style="left:348px;top:996px;width:895px;height:9px;background:#4D4D4D"></div>
<svg class="a" style="left:1647px;top:996px" width="6" height="10"><path d="M0.5 0 L5.5 5 L0.5 10Z" fill="#9A9A9A"/></svg>
<div class="ui" style="left:1681px;top:993px;font-size:11.5px;color:#E8E8E8">Стр: 4945</div>
<div class="ui" style="left:1748px;top:993px;font-size:11.5px;color:#E8E8E8">Симв: 1</div>
<div class="a" style="left:1798px;top:994px;width:1px;height:15px;background:#3A3A3A"></div>
<div class="ui" style="left:1807px;top:993px;font-size:11.5px;color:#E8E8E8">Смешанный</div>
<div class="a" style="left:1880px;top:994px;width:1px;height:15px;background:#3A3A3A"></div>
<div class="ui" style="left:1891px;top:993px;font-size:11.5px;color:#E8E8E8">LF</div>

<!-- status bar -->
<div class="a" style="left:0;top:1011px;width:1920px;height:29px;background:#1F1F1F"></div>
<svg class="a" style="left:3px;top:1019px" width="18" height="18"><path d="M1 1 L17 1 L17 13 L12 13 L9 16 L6 13 L1 13 Z" stroke="#D0D0D0" stroke-width="1.1" fill="none"/></svg>
<div class="ui" style="left:28px;top:1020px;color:#E8E8E8">Готово</div>
<svg class="a" style="left:1712px;top:1020px" width="14" height="14"><path d="M0.5 0.5 L13.5 0.5 M1.5 3 L12.5 3 L12.5 13.5 L1.5 13.5 Z M5 13.5 L5 6 L9 6 L9 13.5 M7 6 L7 9" stroke="#D0D0D0" stroke-width="1.1" fill="none"/></svg>
<div class="ui" style="left:1732px;top:1020px;color:#E8E8E8;letter-spacing:-0.1px">Выбрать репозиторий</div>
<svg class="a" style="left:1862px;top:1024px" width="9" height="5"><path d="M0 5 L8 5 L4 0.5Z" fill="#D0D0D0"/></svg>
<svg class="a" style="left:1888px;top:1019px" width="18" height="18"><path d="M3 12 L3 7 C3 3 5 1.5 7.5 1.5 C10 1.5 12 3 12 7 L12 12 L14 14 L1 14 Z M6 14 C6 16 9 16 9 14" stroke="#D0D0D0" stroke-width="1.1" fill="none"/></svg>
<div class="a" style="left:1897px;top:1027px;width:12px;height:12px;border-radius:6px;background:#F08A9A"></div>
<div class="a" style="left:1899px;top:1027px;font-size:10px;color:#1F1F1F;line-height:12px;font-weight:bold">1</div>

<!-- taskbar -->
<div class="a" style="left:0;top:1040px;width:1920px;height:40px;background:linear-gradient(to right,#223842 0%,#233A44 21%,#213440 52%,#1D2C3F 78%,#1C2842 100%)"></div>
<svg class="a" style="left:16px;top:1052px" width="18" height="17"><path d="M0 2.5 L7.5 1.4 L7.5 8 L0 8 Z M8.5 1.2 L17 0 L17 8 L8.5 8 Z M0 9 L7.5 9 L7.5 15.5 L0 14.5 Z M8.5 9 L17 9 L17 17 L8.5 15.8 Z" fill="#FFFFFF"/></svg>
<svg class="a" style="left:60px;top:1049px" width="24" height="23"><circle cx="13.5" cy="9.5" r="7.5" stroke="#FFFFFF" stroke-width="2" fill="none"/><path d="M8 15 L1.5 21.5" stroke="#FFFFFF" stroke-width="2.2"/></svg>
<svg class="a" style="left:110px;top:1047px" width="26" height="26" viewBox="0 0 26 26"><defs><linearGradient id="eg" x1="0" y1="0" x2="1" y2="0.5"><stop offset="0" stop-color="#1AA8F2"/><stop offset="0.5" stop-color="#36C6B0"/><stop offset="1" stop-color="#78E650"/></linearGradient><linearGradient id="eb" x1="0" y1="0" x2="0.5" y2="1"><stop offset="0" stop-color="#1E94E8"/><stop offset="1" stop-color="#0C4A9B"/></linearGradient></defs><circle cx="13" cy="13" r="12" fill="url(#eb)"/><path d="M0.9 9.8 C2.5 4 8 0.9 13 0.9 C19.5 0.9 25 6 25 12.5 C25 15.5 24 17.8 23 18.5 C20.5 19.5 16 18.5 14.5 16.2 C17 15 17.5 11 14.5 9 C11 7 5 7.5 0.9 9.8 Z" fill="url(#eg)"/><circle cx="12.8" cy="12.9" r="2.7" fill="#1F3540"/><path d="M12 15 C13 16.5 15 17.5 17 17.6 L14.6 15.6 Z" fill="#173050"/></svg>
<svg class="a" style="left:159px;top:1047px" width="28" height="27" viewBox="0 0 28 27"><circle cx="13" cy="13" r="12" fill="#5865F2"/><path d="M6.5 8.5 C8.5 7 10 7 10.8 7.6 L11.3 8.3 C12.4 8.1 13.6 8.1 14.7 8.3 L15.2 7.6 C16 7 17.5 7 19.5 8.5 C20.8 11 21 14 20.6 17 C19 18.3 17.6 18.6 16.8 18.6 L16 17.3 C14 17.8 12 17.8 10 17.3 L9.2 18.6 C8.4 18.6 7 18.3 5.4 17 C5 14 5.2 11 6.5 8.5 Z" fill="#FFFFFF"/><circle cx="10.2" cy="13.2" r="1.6" fill="#5865F2"/><circle cx="15.8" cy="13.2" r="1.6" fill="#5865F2"/><circle cx="19.5" cy="19" r="6.8" fill="#E84B4B"/><text x="14.6" y="22.6" font-size="9.5" font-family="Liberation Sans" fill="#fff">9+</text></svg>
<svg class="a" style="left:210px;top:1047px" width="22" height="26" viewBox="0 0 22 26"><path d="M4.5 10 L4.5 6 C4.5 2 9 1 9.5 4.5 M12.5 4.5 C13 1 17.5 2 17.5 6 L17.5 10" stroke="#2A2A2A" stroke-width="2.2" fill="none"/><path d="M4.5 10 L4.5 6 C4.5 2 9 1 9.5 4.5 M12.5 4.5 C13 1 17.5 2 17.5 6 L17.5 10" stroke="#9A9A9A" stroke-width="0.8" fill="none"/><path d="M1.5 10.5 L9.5 10.5 L8 13 L9.5 15.5 L8 18 L9.5 20.5 L8 23 L9.5 24.5 L1.5 24.5 Z" fill="#F2D21E" stroke="#111" stroke-width="1"/><path d="M20.5 10.5 L12.5 10.5 L14 13 L12.5 15.5 L14 18 L12.5 20.5 L14 23 L12.5 24.5 L20.5 24.5 Z" fill="#F2D21E" stroke="#111" stroke-width="1"/></svg>
<svg class="a" style="left:258px;top:1050px" width="24" height="21"><path d="M0.5 1.5 L8 1.5 L10 3.5 L23 3.5 L23 6 L0.5 6 Z" fill="#E8A81E"/><rect x="0.5" y="5" width="22.5" height="14" rx="1" fill="#FCD66A"/><path d="M6 19.5 L6 13 L17.5 13 L17.5 19.5 L14 19.5 L14 16 L9.5 16 L9.5 19.5 Z" fill="#2A8AE0"/></svg>
<svg class="a" style="left:307px;top:1049px" width="24" height="22" viewBox="0 0 24 22"><rect x="0.5" y="0.5" width="23" height="21" rx="1.5" fill="#4A433E" stroke="#9A928A"/><rect x="1" y="1" width="22" height="3" fill="#5C7D95"/><rect x="15" y="1" width="2" height="3" fill="#D8B23A"/><rect x="17.5" y="1" width="2" height="3" fill="#6BB040"/><rect x="20" y="1" width="2.5" height="3" fill="#D84A3A"/><path d="M3.5 8 L9 11 L3.5 14" stroke="#E8E2DC" stroke-width="1.8" fill="none"/><path d="M10 15.5 L18 15.5" stroke="#E8E2DC" stroke-width="1.6"/></svg>
<div class="a" style="left:344px;top:1040px;width:48px;height:40px;background:#4E6068"></div>
<svg class="a" style="left:355px;top:1047px" width="27" height="27" viewBox="0 0 27 27"><path d="M1.3 8 L4.8 10.2 L4.8 17 L1.3 19Z" fill="#6A45A5"/><path d="M1.3 19 L7 13.5 L10 16.5 L5 21.2Z" fill="#7A52BA"/><path d="M10.5 9.5 L18.7 1.7 L18.7 11 L13.8 14.5Z" fill="#7950B8"/><path d="M1.3 8 L5 5.2 L18.7 16.5 L18.7 25 Z" fill="#A77AE0"/><path d="M18.7 1.7 L25 5 L25 20.6 L18.7 25Z" fill="#C98EF5"/></svg>
<div class="a" style="left:103px;top:1078px;width:40px;height:2px;background:#76B9ED"></div>
<div class="a" style="left:152px;top:1078px;width:40px;height:2px;background:#76B9ED"></div>
<div class="a" style="left:201px;top:1078px;width:40px;height:2px;background:#76B9ED"></div>
<div class="a" style="left:250px;top:1078px;width:40px;height:2px;background:#76B9ED"></div>
<div class="a" style="left:299px;top:1078px;width:40px;height:2px;background:#76B9ED"></div>
<div class="a" style="left:344px;top:1078px;width:48px;height:2px;background:#76B9ED"></div>

<svg class="a" style="left:1650px;top:1054px" width="14" height="9"><path d="M1 8 L7 1.5 L13 8" stroke="#FFFFFF" stroke-width="1.3" fill="none"/></svg>
<svg class="a" style="left:1672px;top:1052px" width="18" height="17"><path d="M4.5 2.5 L16.5 2.5 L16.5 10.5 L4.5 10.5 M1.5 2.5 L4.5 2.5 L4.5 6.5 L1.5 6.5 Z M2.5 6.5 L2.5 15.5 M10.5 10.5 L10.5 14.5 M6 14.5 L15 14.5" stroke="#fff" stroke-width="1" fill="none"/><path d="M2.2 4.2 L3 5 L3.8 4.2" stroke="#fff" stroke-width="0.6" fill="none"/></svg>
<svg class="a" style="left:1696px;top:1052px" width="18" height="17"><path d="M1.5 5.5 L4 5.5 L7 2 L7 14.5 L4 11 L1.5 11 Z" stroke="#fff" stroke-width="1" fill="none"/><path d="M9.5 6 C10.5 7.5 10.5 9.5 9.5 11 M11.5 4 C13.2 6.5 13.2 10.5 11.5 13 M13.8 1.8 C16.5 5.5 16.5 11.5 13.8 15" stroke="#fff" stroke-width="1" fill="none"/></svg>
<svg class="a" style="left:1720px;top:1052px" width="17" height="17" viewBox="0 0 17 17"><defs><linearGradient id="stg" x1="0" y1="0" x2="0" y2="1"><stop offset="0" stop-color="#15244A"/><stop offset="0.6" stop-color="#1A4F8A"/><stop offset="1" stop-color="#1E8FD0"/></linearGradient></defs><circle cx="8.5" cy="8.5" r="8" fill="url(#stg)"/><circle cx="10.5" cy="6" r="2.9" stroke="#fff" stroke-width="1.1" fill="none"/><circle cx="10.5" cy="6" r="1.2" fill="#fff"/><path d="M0.8 9.5 L5 11 M8 8 L5.5 11.5" stroke="#fff" stroke-width="1.6"/><circle cx="5.5" cy="12" r="2" fill="#fff"/></svg>
<svg class="a" style="left:1745px;top:1051px" width="18" height="16"><path d="M3 5 C5 3.8 6.2 3.8 6.8 4.3 L7.2 4.9 C8.4 4.7 9.6 4.7 10.8 4.9 L11.2 4.3 C11.8 3.8 13 3.8 15 5 C16.2 7.5 16.3 10 16 12.2 C14.6 13.3 13.4 13.6 12.8 13.6 L12.1 12.5 C10.2 13 7.8 13 5.9 12.5 L5.2 13.6 C4.6 13.6 3.4 13.3 2 12.2 C1.7 10 1.8 7.5 3 5 Z" fill="#fff"/><circle cx="6.8" cy="9.3" r="1.2" fill="#1C2842"/><circle cx="11.2" cy="9.3" r="1.2" fill="#1C2842"/><circle cx="14" cy="3.5" r="2.6" fill="#E84545"/></svg>
<div class="ui" style="left:1771px;top:1052px;color:#FFFFFF;font-size:12px;letter-spacing:-0.6px">ENG</div>
<div class="ui" style="left:1819px;top:1043px;color:#FFFFFF;font-size:12px;letter-spacing:-0.3px">21:56</div>
<div class="ui" style="left:1807px;top:1061px;color:#FFFFFF;font-size:12px;letter-spacing:-0.6px">30.12.2024</div>
<svg class="a" style="left:1878px;top:1051px" width="20" height="18"><path d="M1 1 L19 1 L19 13 L12 13 L9.5 16.5 L7 13 L1 13 Z" stroke="#fff" stroke-width="1.1" fill="none"/></svg>
<div class="a" style="left:1915px;top:1040px;width:1px;height:40px;background:#5A6676"></div>

<!-- watermark -->
<svg class="a" style="left:1340px;top:940px;mix-blend-mode:screen" width="560" height="100">
<defs><linearGradient id="wg" x1="0" x2="1" y1="0" y2="0"><stop offset="0" stop-color="#1A1F4C"/><stop offset="0.5" stop-color="#24244C"/><stop offset="1" stop-color="#342B51"/></linearGradient></defs>
<g transform="scale(0.934,1)"><text x="12.2" y="75.6" font-family="Liberation Sans" font-weight="bold" font-size="102" fill="url(#wg)" stroke="#4E4E4E" stroke-width="2">ragemp.pro</text></g>
</svg>

</body></html>
